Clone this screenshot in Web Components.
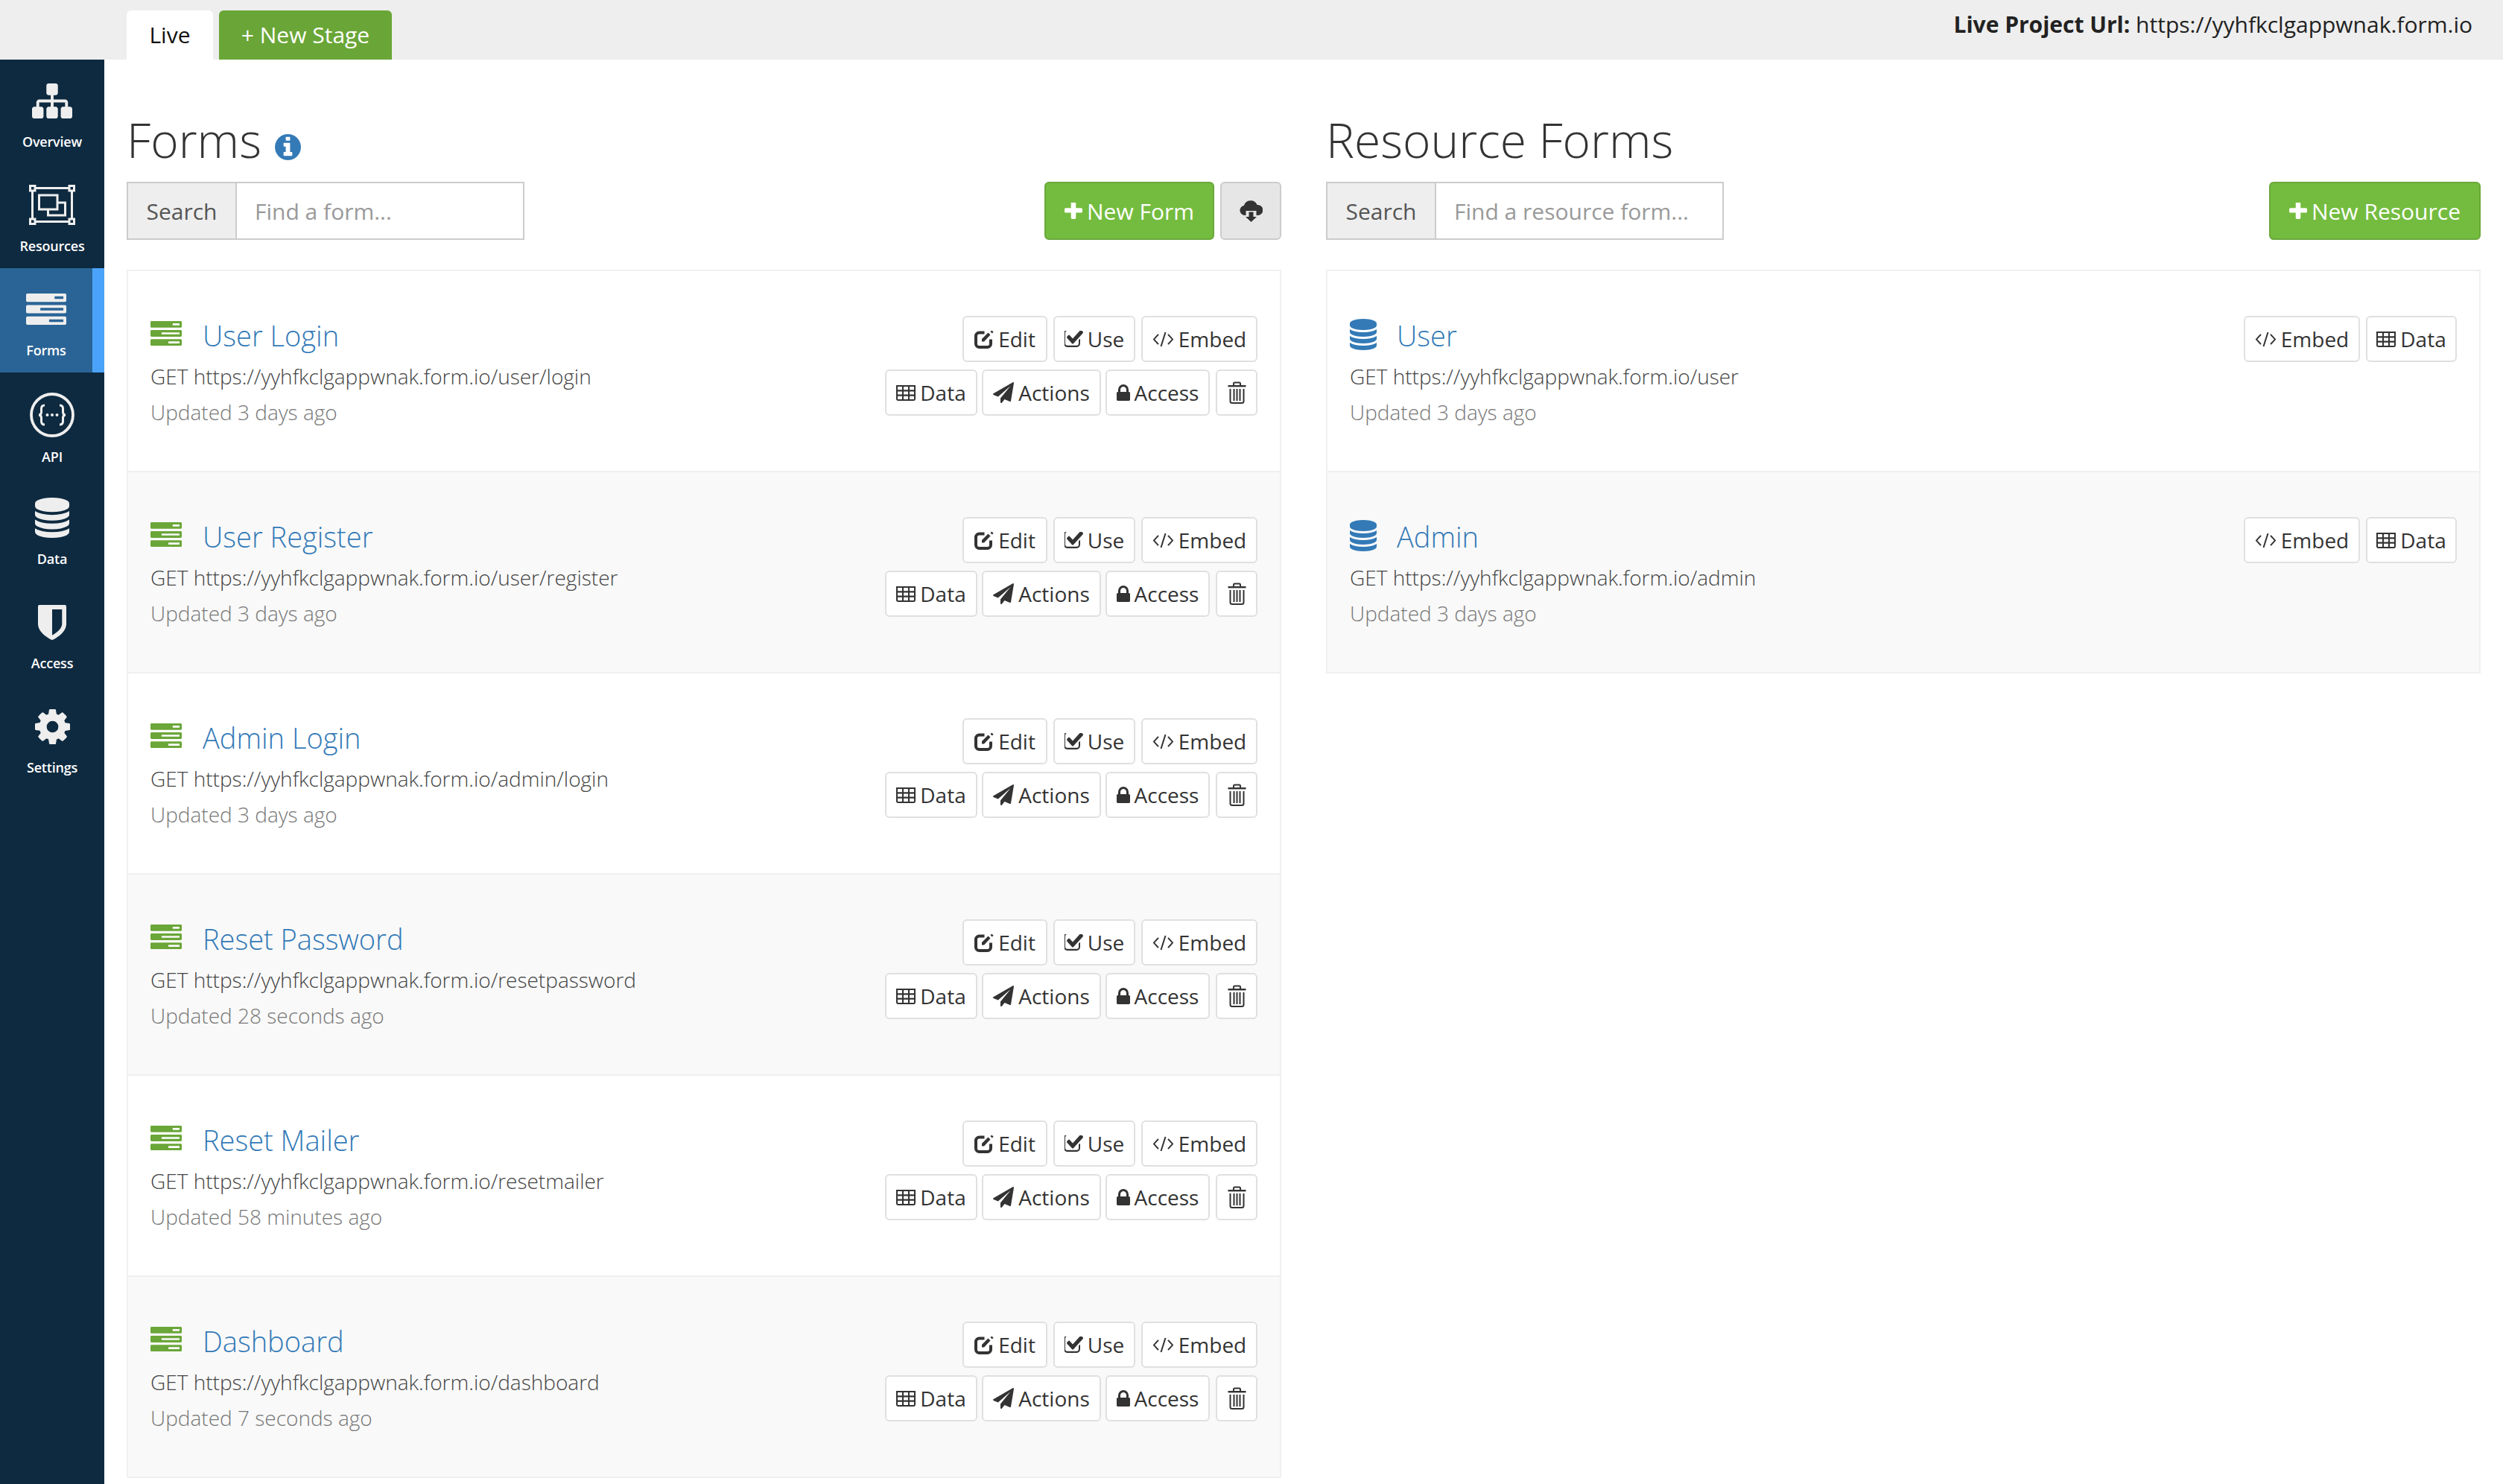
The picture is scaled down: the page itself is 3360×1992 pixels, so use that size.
<!DOCTYPE html>
<html lang="en">
<head>
<meta charset="utf-8">
<title>Forms</title>
<style>
html,body{margin:0;padding:0;background:#fff}
body{font-family:"Open Sans","Noto Sans",sans-serif;font-size:28px;color:#333;width:3360px;height:1992px;overflow:hidden}
</style>
</head>
<body>
<fio-app>
  <fio-topbar slot="top"></fio-topbar>
  <fio-sidebar slot="side">
    <fio-nav icon="sitemap" w="54" h="47">Overview</fio-nav>
    <fio-nav icon="resources" w="62" h="54">Resources</fio-nav>
    <fio-nav icon="server" w="54" h="42" active>Forms</fio-nav>
    <fio-nav icon="swagger" w="60" h="60" style="--nudge:3px">API</fio-nav>
    <fio-nav icon="database" w="46" h="54">Data</fio-nav>
    <fio-nav icon="shield" w="38" h="47">Access</fio-nav>
    <fio-nav icon="cog" w="47" h="47">Settings</fio-nav>
  </fio-sidebar>
  <fio-panel title="Forms" info placeholder="Find a form...">
    <fio-btn slot="actions" kind="green" icon="plus">New Form</fio-btn>
    <fio-btn slot="actions" kind="grey" icon="cloud" style="--w:82px"></fio-btn>
    <fio-item kind="form" name="User Login" url="GET https://yyhfkclgappwnak.form.io/user/login" updated="Updated 3 days ago"></fio-item>
    <fio-item kind="form" name="User Register" url="GET https://yyhfkclgappwnak.form.io/user/register" updated="Updated 3 days ago"></fio-item>
    <fio-item kind="form" name="Admin Login" url="GET https://yyhfkclgappwnak.form.io/admin/login" updated="Updated 3 days ago"></fio-item>
    <fio-item kind="form" name="Reset Password" url="GET https://yyhfkclgappwnak.form.io/resetpassword" updated="Updated 28 seconds ago"></fio-item>
    <fio-item kind="form" name="Reset Mailer" url="GET https://yyhfkclgappwnak.form.io/resetmailer" updated="Updated 58 minutes ago"></fio-item>
    <fio-item kind="form" name="Dashboard" url="GET https://yyhfkclgappwnak.form.io/dashboard" updated="Updated 7 seconds ago"></fio-item>
  </fio-panel>
  <fio-panel title="Resource Forms" placeholder="Find a resource form...">
    <fio-btn slot="actions" kind="green" icon="plus">New Resource</fio-btn>
    <fio-item kind="resource" name="User" url="GET https://yyhfkclgappwnak.form.io/user" updated="Updated 3 days ago"></fio-item>
    <fio-item kind="resource" name="Admin" url="GET https://yyhfkclgappwnak.form.io/admin" updated="Updated 3 days ago"></fio-item>
  </fio-panel>
</fio-app>
<script>
const FA = {
  plus:['192 192 1408 1408','<path d="M1600 736v192q0 40-28 68t-68 28h-416v416q0 40-28 68t-68 28h-192q-40 0-68-28t-28-68v-416h-416q-40 0-68-28t-28-68v-192q0-40 28-68t68-28h416v-416q0-40 28-68t68-28h192q40 0 68 28t28 68v416h416q40 0 68 28t28 68z"/>'],
  lock:['320 128 1152 1408','<path d="M640 768h512v-192q0-106-75-181t-181-75-181 75-75 181v192zm832 96v576q0 40-28 68t-68 28h-960q-40 0-68-28t-28-68v-576q0-40 28-68t68-28h32v-192q0-184 132-316t316-132 316 132 132 316v192h32q40 0 68 28t28 68z"/>'],
  plane:['0 0 1792 1792','<path d="M1764 11q33 24 27 64l-256 1536q-5 29-32 45-14 8-31 8-11 0-24-5l-453-185-242 295q-18 23-49 23-13 0-22-4-19-7-30.5-23.5t-11.5-36.5v-349l864-1059-1069 925-395-162q-37-14-40-55-2-40 32-59l1664-960q15-9 32-9 19 0 36 11z"/>'],
  table:['64 256 1664 1280','<path d="M576 1376v-192q0-14-9-23t-23-9h-320q-14 0-23 9t-9 23v192q0 14 9 23t23 9h320q14 0 23-9t9-23zm0-384v-192q0-14-9-23t-23-9h-320q-14 0-23 9t-9 23v192q0 14 9 23t23 9h320q14 0 23-9t9-23zm512 384v-192q0-14-9-23t-23-9h-320q-14 0-23 9t-9 23v192q0 14 9 23t23 9h320q14 0 23-9t9-23zm-512-768v-192q0-14-9-23t-23-9h-320q-14 0-23 9t-9 23v192q0 14 9 23t23 9h320q14 0 23-9t9-23zm512 384v-192q0-14-9-23t-23-9h-320q-14 0-23 9t-9 23v192q0 14 9 23t23 9h320q14 0 23-9t9-23zm512 384v-192q0-14-9-23t-23-9h-320q-14 0-23 9t-9 23v192q0 14 9 23t23 9h320q14 0 23-9t9-23zm-512-768v-192q0-14-9-23t-23-9h-320q-14 0-23 9t-9 23v192q0 14 9 23t23 9h320q14 0 23-9t9-23zm512 384v-192q0-14-9-23t-23-9h-320q-14 0-23 9t-9 23v192q0 14 9 23t23 9h320q14 0 23-9t9-23zm0-384v-192q0-14-9-23t-23-9h-320q-14 0-23 9t-9 23v192q0 14 9 23t23 9h320q14 0 23-9t9-23zm128-320v1088q0 66-47 113t-113 47h-1344q-66 0-113-47t-47-113v-1088q0-66 47-113t113-47h1344q66 0 113 47t47 113z"/>'],
  database:['128 0 1536 1792','<path d="M896 768q237 0 443-43t325-127v170q0 69-103 128t-280 93.5-385 34.5-385-34.5-280-93.5-103-128v-170q119 84 325 127t443 43zm0 768q237 0 443-43t325-127v170q0 69-103 128t-280 93.5-385 34.5-385-34.5-280-93.5-103-128v-170q119 84 325 127t443 43zm0-384q237 0 443-43t325-127v170q0 69-103 128t-280 93.5-385 34.5-385-34.5-280-93.5-103-128v-170q119 84 325 127t443 43zm0-1152q208 0 385 34.5t280 93.5 103 128v128q0 69-103 128t-280 93.5-385 34.5-385-34.5-280-93.5-103-128v-128q0-69 103-128t280-93.5 385-34.5z"/>'],
  cog:['128 128 1536 1536','<path d="M1152 896q0-106-75-181t-181-75-181 75-75 181 75 181 181 75 181-75 75-181zm512-109v222q0 12-8 23t-20 13l-185 28q-19 54-39 91 35 50 107 138 10 12 10 25t-9 23q-27 37-99 108t-94 71q-12 0-26-9l-138-108q-44 23-91 38-16 136-29 186-7 28-36 28h-222q-14 0-24.5-8.5t-11.5-21.5l-28-184q-49-16-90-37l-141 107q-10 9-25 9-14 0-25-11-126-114-165-168-7-10-7-23 0-12 8-23 15-21 51-66.5t54-70.5q-27-50-41-99l-183-27q-13-2-21-12.5t-8-23.5v-222q0-12 8-23t19-13l186-28q14-46 39-92-40-57-107-138-10-12-10-24 0-10 9-23 26-36 98.5-107.5t94.5-71.5q13 0 26 10l138 107q44-23 91-38 16-136 29-186 7-28 36-28h222q14 0 24.5 8.5t11.5 21.5l28 184q49 16 90 37l142-107q9-9 24-9 13 0 25 10 129 119 165 170 7 8 7 22 0 12-8 23-15 21-51 66.5t-54 70.5q26 50 41 98l183 28q13 2 21 12.5t8 23.5z"/>'],
  sitemap:['0 128 1792 1536','<path d="M1792 1248v320q0 40-28 68t-68 28h-320q-40 0-68-28t-28-68v-320q0-40 28-68t68-28h96v-192h-512v192h96q40 0 68 28t28 68v320q0 40-28 68t-68 28h-320q-40 0-68-28t-28-68v-320q0-40 28-68t68-28h96v-192h-512v192h96q40 0 68 28t28 68v320q0 40-28 68t-68 28h-320q-40 0-68-28t-28-68v-320q0-40 28-68t68-28h96v-192q0-52 38-90t90-38h512v-192h-96q-40 0-68-28t-28-68v-320q0-40 28-68t68-28h320q40 0 68 28t28 68v320q0 40-28 68t-68 28h-96v192h512q52 0 90 38t38 90v192h96q40 0 68 28t28 68z"/>'],
  info:['128 128 1536 1536','<path d="M1152 1376v-160q0-14-9-23t-23-9h-96v-512q0-14-9-23t-23-9h-320q-14 0-23 9t-9 23v160q0 14 9 23t23 9h96v320h-96q-14 0-23 9t-9 23v160q0 14 9 23t23 9h448q14 0 23-9t9-23zm-128-896v-160q0-14-9-23t-23-9h-192q-14 0-23 9t-9 23v160q0 14 9 23t23 9h192q14 0 23-9t9-23zm640 416q0 209-103 385.5t-279.5 279.5-385.5 103-385.5-103-279.5-279.5-103-385.5 103-385.5 279.5-279.5 385.5-103 385.5 103 279.5 279.5 103 385.5z"/>'],
  shield:['256 128 1280 1536','<path d="M1344 960v-640h-448v1137q119-63 213-137 235-184 235-360zm192-768v768q0 86-33.5 170.5t-83 150-118 127.5-126.5 103-121 77.5-89.5 49.5-42.5 20q-12 6-26 6t-26-6q-16-7-42.5-20t-89.5-49.5-121-77.5-126.5-103-118-127.5-83-150-33.5-170.5v-768q0-26 19-45t45-19h1152q26 0 45 19t19 45z"/>'],
  check:['128 256 1600 1280','<path d="M1472 930v318q0 119-84.5 203.5t-203.5 84.5h-832q-119 0-203.5-84.5t-84.5-203.5v-832q0-119 84.5-203.5t203.5-84.5h832q63 0 117 25 15 7 18 23 3 17-9 29l-49 49q-10 10-23 10-3 0-9-2-23-6-45-6h-832q-66 0-113 47t-47 113v832q0 66 47 113t113 47h832q66 0 113-47t47-113v-254q0-13 9-22l64-64q10-10 23-10 6 0 12 3 20 8 20 29zm231-489l-814 814q-24 24-57 24t-57-24l-430-430q-24-24-24-57t24-57l110-110q24-24 57-24t57 24l263 263 647-647q24-24 57-24t57 24l110 110q24 24 24 57t-24 57z"/>'],
  edit:['0 0 26 26','<path d="M13.500 4.500H6.500a4.500 4.500 0 0 0-4.500 4.500v10.500a4.500 4.500 0 0 0 4.500 4.500h11a4.500 4.500 0 0 0 4.500-4.500v-6" fill="none" stroke="currentColor" stroke-width="4"/><path d="M10 16.500v-3.500l8.500-8.500 3 3-8.500 9z"/><path d="M21.500 3.200l1.800-1.800 2.300 2.300-1.800 1.800z"/>'],
  code:['0 0 29 22','<path d="M8 4L2 11l6 7M21 4l6 7-6 7M17.500 1l-6 20" fill="none" stroke="currentColor" stroke-width="2"/>'],
  trash:['0 0 25 30','<path d="M0.500 6.200h24" fill="none" stroke="currentColor" stroke-width="2.400"/><path d="M8 6V3a1.500 1.500 0 0 1 1.500-1.500h6A1.500 1.500 0 0 1 17 3v3" fill="none" stroke="currentColor" stroke-width="2"/><path d="M3.500 10v16.500a2.500 2.500 0 0 0 2.500 2.500h13a2.500 2.500 0 0 0 2.500-2.500V10M8.500 10v16M12.500 10v16M16.500 10v16" fill="none" stroke="currentColor" stroke-width="2"/>'],
  cloud:['0 0 31 30','<path d="M7 21a6.500 6.500 0 0 1-1.200-12.900A9.500 9.500 0 0 1 23.600 7 7 7 0 0 1 25 21h-2.500v-6H8.500v6z"/><path d="M12.500 16.500h6V23h4.500l-7.500 7-7.500-7h4.500z"/>'],
  server:['0 0 110 98','<path fill-rule="evenodd" d="M4 0h102a4 4 0 0 1 4 4v18a4 4 0 0 1-4 4H4a4 4 0 0 1-4-4V4a4 4 0 0 1 4-4zM78 9v8h24V9zM4 36h102a4 4 0 0 1 4 4v18a4 4 0 0 1-4 4H4a4 4 0 0 1-4-4V40a4 4 0 0 1 4-4zM39 45v8h63v-8zM4 72h102a4 4 0 0 1 4 4v18a4 4 0 0 1-4 4H4a4 4 0 0 1-4-4V76a4 4 0 0 1 4-4zM63 81v8h39v-8z"/>'],
  resources:['0 0 62 54','<g fill="none" stroke="currentColor" stroke-width="3"><rect x="1.500" y="1.500" width="6.500" height="6.500"/><rect x="54" y="1.500" width="6.500" height="6.500"/><rect x="1.500" y="46" width="6.500" height="6.500"/><rect x="54" y="46" width="6.500" height="6.500"/><path d="M8 4.500h46M8 49.500h46M4.500 8v38M57.500 8v38"/><rect x="13.500" y="14" width="24.500" height="19"/><path d="M38 24h10.500v17H25.500v-8"/></g>'],
  swagger:['0 0 60 60','<circle cx="30" cy="30" r="28" fill="none" stroke="currentColor" stroke-width="3.800"/><path d="M20 17c-3.500 0-4.500 2-4.500 4.500V26c0 2.500-1.500 4-3.500 4 2 0 3.500 1.500 3.500 4v4.500c0 2.500 1 4.500 4.500 4.500M40 17c3.500 0 4.500 2 4.500 4.500V26c0 2.500 1.500 4 3.500 4-2 0-3.500 1.500-3.500 4v4.500c0 2.500-1 4.500-4.500 4.500" fill="none" stroke="currentColor" stroke-width="3"/><circle cx="23.500" cy="30" r="2"/><circle cx="30" cy="30" r="2"/><circle cx="36.500" cy="30" r="2"/>']
};

function define(tag, css, html, setup){
  const tpl = document.createElement('template');
  tpl.innerHTML = '<style>'+css+'</style>'+html;
  customElements.define(tag, class extends HTMLElement{
    constructor(){super();this.attachShadow({mode:'open'}).appendChild(tpl.content.cloneNode(true));}
    connectedCallback(){ if(setup && !this._done){this._done=true;setup.call(this,this.shadowRoot);} }
  });
}

customElements.define('fio-icon', class extends HTMLElement{
  constructor(){super();this.attachShadow({mode:'open'});}
  connectedCallback(){
    const [vb,body]=FA[this.getAttribute('name')];
    const w=this.getAttribute('w'),h=this.getAttribute('h');
    this.shadowRoot.innerHTML='<style>:host{display:inline-flex;flex:none;line-height:0}svg{display:block;fill:currentColor}</style>'+
      '<svg xmlns="http://www.w3.org/2000/svg" viewBox="'+vb+'" width="'+w+'" height="'+h+'" preserveAspectRatio="none">'+body+'</svg>';
  }
});

define('fio-app',
 `:host{display:grid;grid-template-columns:140px 1fr 1fr;grid-template-rows:80px 1912px;width:3360px;height:1992px}
  .top{grid-column:1/-1}
  .cols{grid-column:2/4;display:grid;grid-template-columns:1550px 1550px;gap:60px;padding:0 30px;min-width:0}`,
 `<div class="top"><slot name="top"></slot></div><slot name="side"></slot><div class="cols"><slot></slot></div>`);

define('fio-topbar',
 `:host{display:flex;height:80px;background:#eee;padding-left:170px;box-sizing:border-box;align-items:flex-end;justify-content:space-between;font-size:30px}
  .tabs{display:flex;gap:8px;height:66px}
  .tab{display:flex;align-items:center;justify-content:center;padding-bottom:2px;box-sizing:border-box;border-radius:6px 6px 0 0}
  .live{width:116px;background:#fff;color:#111}
  .new{width:232px;background:#6aa637;color:#fff}
  .url{align-self:flex-start;height:64px;display:flex;align-items:center;padding-right:41px;color:#222;white-space:pre}
  b{font-weight:700}`,
 `<div class="tabs"><div class="tab live">Live</div><div class="tab new">+ New Stage</div></div>
  <div class="url"><b>Live Project Url:</b> https://yyhfkclgappwnak.form.io</div>`);

define('fio-sidebar',
 `:host{display:flex;flex-direction:column;width:140px;background:#0e2a40;height:1912px}`,
 `<slot></slot>`);

define('fio-nav',
 `:host{display:block;height:140px;box-sizing:border-box;color:#fff}
  :host([active]){background:#2a6496;border-right:16px solid #4aa3f8}
  .i{height:80px;margin-top:15px;display:flex;align-items:center;justify-content:center;color:#eee;padding-top:var(--nudge,0);box-sizing:border-box}
  .l{height:30px;line-height:30px;text-align:center;font-size:18px;font-weight:600;letter-spacing:-.2px;padding-top:calc(var(--nudge,0px));}`,
 `<div class="i"></div><div class="l"><slot></slot></div>`,
 function(s){
   const ic=document.createElement('fio-icon');
   ['w','h'].forEach(a=>ic.setAttribute(a,this.getAttribute(a)));
   ic.setAttribute('name',this.getAttribute('icon'));
   s.querySelector('.i').appendChild(ic);
 });

define('fio-search',
 `:host{display:flex;width:534px;height:78px;box-sizing:border-box;border:2px solid #ccc;background:#fff;font-size:30px}
  .a{width:146px;background:#eee;color:#555;border-right:2px solid #ccc;display:flex;align-items:center;justify-content:center;box-sizing:border-box;flex:none}
  .p{flex:1;color:#999;display:flex;align-items:center;padding-left:24px}`,
 `<div class="a">Search</div><div class="p"></div>`,
 function(s){ s.querySelector('.p').textContent=this.getAttribute('placeholder'); });

define('fio-btn',
 `:host{display:inline-flex;align-items:center;justify-content:center;gap:6px;box-sizing:border-box;height:62px;width:var(--w,auto);padding:0;border:2px solid #e0e0e0;border-radius:6px;background:#fff;color:#333;white-space:nowrap;flex:none}
  :host([kind=green]){height:78px;background:#74bc3f;border-color:#69a83a;color:#fff;padding:0 25px;gap:6px;font-size:30px}
  :host([kind=grey]){height:78px;background:#e6e6e6;border-color:#ccc;color:#333}`,
 `<span id="ic" style="display:inline-flex"></span><slot></slot>`,
 function(s){
   const m={plus:[24,23],cloud:[31,30],edit:[26,26],check:[25,22],code:[29,21],table:[26,21],plane:[28,28],lock:[18,22],trash:[25,30]};
   const n=this.getAttribute('icon');
   const ic=document.createElement('fio-icon');
   ic.setAttribute('name',n);ic.setAttribute('w',m[n][0]);ic.setAttribute('h',m[n][1]);
   s.getElementById('ic').appendChild(ic);
 });

define('fio-panel',
 `:host{display:block;min-width:0}
  h1{margin:0;height:164px;box-sizing:border-box;padding-top:72px;font-size:64px;line-height:72px;font-weight:300;color:#333;display:flex;align-items:flex-start;gap:18px}
  h1 span{display:flex;padding-top:28px;color:#337ab7}
  .bar{display:flex;justify-content:space-between;height:78px;margin-bottom:40px}
  .acts{display:flex;gap:8px}
  .list{display:flex;flex-direction:column}`,
 `<h1><i style="font-style:normal"></i><span></span></h1>
  <div class="bar"><div class="s"></div><div class="acts"><slot name="actions"></slot></div></div>
  <div class="list"><slot></slot></div>`,
 function(s){
   s.querySelector('h1 i').textContent=this.getAttribute('title');
   this.removeAttribute('title');
   if(this.hasAttribute('info')){
     const ic=document.createElement('fio-icon');
     ic.setAttribute('name','info');ic.setAttribute('w',35);ic.setAttribute('h',35);
     s.querySelector('h1 span').appendChild(ic);
   }
   const se=document.createElement('fio-search');
   se.setAttribute('placeholder',this.getAttribute('placeholder'));
   s.querySelector('.s').appendChild(se);
 });

define('fio-item',
 `:host{display:flex;justify-content:space-between;height:272px;margin-bottom:-2px;box-sizing:border-box;border:2px solid #f0f0f0;background:#fff;padding:60px 30px 0}
  :host(:nth-of-type(even)){background:#f9f9f9}
  .left{min-width:0}
  .name{display:flex;align-items:center;height:48px;font-size:38px;font-weight:300;color:#337ab7;margin-top:2px}
  .ic{display:flex;color:#6aa638;width:70px;margin-top:-5px}
  :host([kind=resource]) .ic{color:#337ab7;width:63px;margin-top:-2px}
  .url{font-weight:300;color:#444;line-height:46px;margin-top:8px;height:46px;white-space:nowrap}
  .upd{font-weight:300;color:#777;line-height:46px;height:46px;white-space:nowrap;margin-top:2px}
  .right{display:flex;flex-direction:column;gap:10px;align-items:flex-end}
  .row{display:flex;gap:8px}
  .row .tight{margin-right:-2px}`,
 `<div class="left"><div class="name"><span class="ic"></span><span class="n"></span></div><div class="url"></div><div class="upd"></div></div>
  <div class="right"></div>`,
 function(s){
   s.querySelector('.n').textContent=this.getAttribute('name');
   s.querySelector('.url').textContent=this.getAttribute('url');
   s.querySelector('.upd').textContent=this.getAttribute('updated');
   const res=this.getAttribute('kind')==='resource';
   s.querySelector('.ic').innerHTML=res?'<fio-icon name="database" w="36" h="42"></fio-icon>':'<fio-icon name="server" w="42" h="33"></fio-icon>';
   const b=(i,t,w,c)=>'<fio-btn icon="'+i+'" '+(c?'class="tight" ':'')+'style="--w:'+w+'px">'+t+'</fio-btn>';
   s.querySelector('.right').innerHTML=res
     ? '<div class="row">'+b('code','Embed',156)+b('table','Data',122)+'</div>'
     : '<div class="row">'+b('edit','Edit',114)+b('check','Use',110)+b('code','Embed',156)+'</div>'+
       '<div class="row">'+b('table','Data',124,1)+b('plane','Actions',160,1)+b('lock','Access',140)+b('trash','',56)+'</div>';
 });
</script>
</body>
</html>
